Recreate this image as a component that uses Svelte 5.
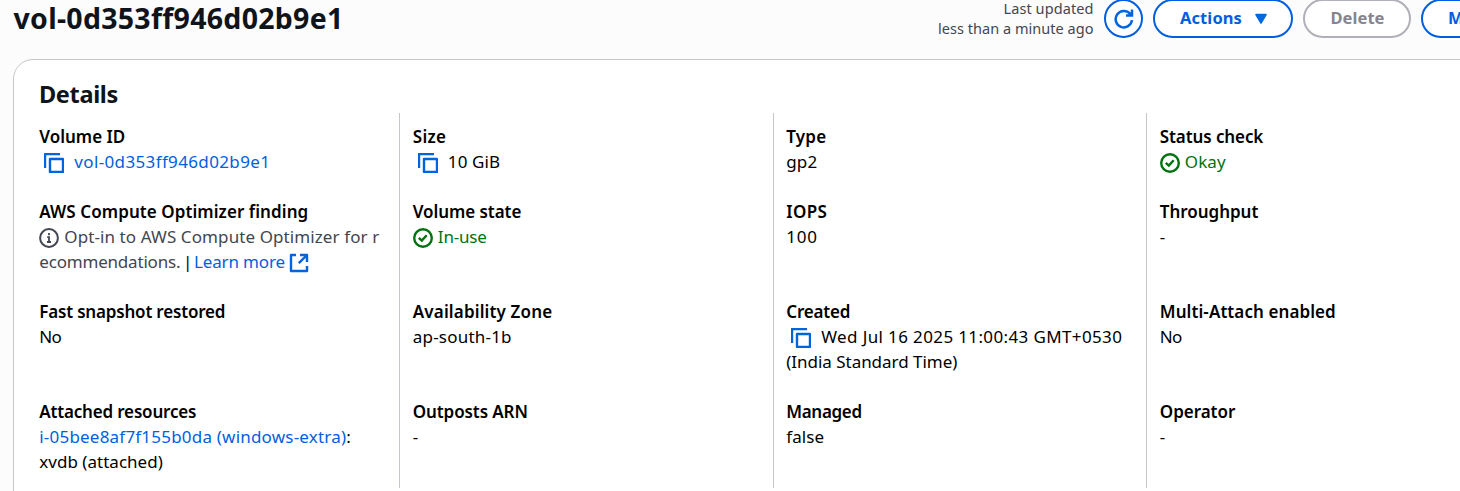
<script>
  const title = { text: 'vol-0d353ff946d02b9e1', width: 330 };

  // Each line holds its parts; width is the advance that the text is tracked to.
  const columns = [
    [
      { label: 'Volume ID', width: 86, lines: [[{ icon: 'copy' }, { text: 'vol-0d353ff946d02b9e1', width: 196, kind: 'link' }]] },
      {
        label: 'AWS Compute Optimizer finding', width: 269,
        lines: [
          [{ icon: 'info' }, { text: 'Opt-in to AWS Compute Optimizer for r', width: 315, kind: 'muted' }],
          [{ text: 'ecommendations.', width: 141, kind: 'muted' }, { text: '|', width: 9.4, kind: 'bar' }, { text: 'Learn more', width: 91, kind: 'link' }, { icon: 'external' }]
        ]
      },
      { label: 'Fast snapshot restored', width: 186, lines: [[{ text: 'No', width: 22 }]] },
      {
        label: 'Attached resources', width: 157,
        lines: [
          [{ text: 'i-05bee8af7f155b0da (windows-extra)', width: 307, kind: 'link' }, { text: ':', width: 4 }],
          [{ text: 'xvdb (attached)', width: 123.5 }]
        ]
      }
    ],
    [
      { label: 'Size', width: 33.5, lines: [[{ icon: 'copy' }, { text: '10 GiB', width: 52.5 }]] },
      { label: 'Volume state', width: 108.5, lines: [[{ icon: 'check' }, { text: 'In-use', width: 49, kind: 'ok' }]] },
      { label: 'Availability Zone', width: 139.5, lines: [[{ text: 'ap-south-1b', width: 99 }]] },
      { label: 'Outposts ARN', width: 115, lines: [[{ text: '-', width: 6 }]] }
    ],
    [
      { label: 'Type', width: 40, lines: [[{ text: 'gp2', width: 31 }]] },
      { label: 'IOPS', width: 41, lines: [[{ text: '100', width: 31.5 }]] },
      {
        label: 'Created', width: 64,
        lines: [
          [{ icon: 'copy' }, { text: 'Wed Jul 16 2025 11:00:43 GMT+0530', width: 301 }],
          [{ text: '(India Standard Time)', width: 171 }]
        ]
      },
      { label: 'Managed', width: 75.5, lines: [[{ text: 'false', width: 38 }]] }
    ],
    [
      { label: 'Status check', width: 103.5, lines: [[{ icon: 'check' }, { text: 'Okay', width: 41, kind: 'ok' }]] },
      { label: 'Throughput', width: 98.5, lines: [[{ text: '-', width: 6 }]] },
      { label: 'Multi-Attach enabled', width: 176, lines: [[{ text: 'No', width: 22 }]] },
      { label: 'Operator', width: 75.5, lines: [[{ text: '-', width: 6 }]] }
    ]
  ];

  // Spreads the difference between natural and wanted width over the letters.
  function track(node, width) {
    const natural = node.getBoundingClientRect().width;
    const count = node.textContent.length;
    node.style.letterSpacing = `${(width - natural) / count}px`;
  }
</script>

{#snippet icon(name)}
  {#if name === 'copy'}
    <svg class="icon copy" viewBox="0 0 20 20"><path d="M1 15V1h15" stroke-linejoin="round" /><rect x="6" y="6" width="13" height="13" stroke-linejoin="round" /></svg>
  {:else if name === 'info'}
    <svg class="icon info" viewBox="0 0 20 20"><circle cx="10" cy="10" r="8.9" /><path d="M10 5v2.2M8.2 9.2H10v5M8 14h4" stroke-width="1.8" /></svg>
  {:else if name === 'check'}
    <svg class="icon check" viewBox="0 0 20 20"><circle cx="10" cy="10" r="8.8" /><path d="M5.8 9.8l3 2.8 4.9-5.4" /></svg>
  {:else}
    <svg class="icon external" viewBox="0 0 20 20"><path d="M7 2H2v16h16v-5M11 2h7v7M18 2l-8.2 8.2" stroke-linejoin="round" /></svg>
  {/if}
{/snippet}

<div class="page">
  <header>
    <h1><span use:track={title.width}>{title.text}</span></h1>
    <div class="actions">
      <p class="updated">
        <span use:track={90}>Last updated</span>
        <span use:track={155.5}>less than a minute ago</span>
      </p>
      <button class="refresh" aria-label="Refresh">
        <svg viewBox="0 0 20 20"><path d="M18 11.2A8.2 8.2 0 1 1 16 4.7l1.4 1.6M18 .6v6h-6" /></svg>
      </button>
      <button class="menu">
        <span use:track={62}>Actions</span>
        <svg viewBox="0 0 14 12"><path d="M2 1.6h10L7 10z" /></svg>
      </button>
      <button class="delete" disabled><span use:track={54}>Delete</span></button>
      <button class="modify"><span use:track={57}>Modify</span></button>
    </div>
  </header>

  <section class="card">
    <h2><span use:track={79}>Details</span></h2>
    <div class="columns">
      {#each columns as fields}
        <dl>
          {#each fields as field}
            <div class="field">
              <dt><span use:track={field.width}>{field.label}</span></dt>
              {#each field.lines as line}
                <dd>
                  {#each line as part}
                    {#if part.icon}
                      {@render icon(part.icon)}
                    {:else}
                      <span class={part.kind} use:track={part.width}>{part.text}</span>
                    {/if}
                  {/each}
                </dd>
              {/each}
            </div>
          {/each}
        </dl>
      {/each}
    </div>
  </section>
</div>

<style>
  :global(body) {
    margin: 0;
    overflow: hidden;
    background: #fcfcfd;
  }
  .page {
    box-sizing: border-box;
    width: 1460px;
    height: 491px;
    overflow: hidden;
    font-family: 'Noto Sans', 'Open Sans', sans-serif;
    font-size: 17px;
    line-height: 25px;
    color: #0f141a;
  }
  span {
    display: inline-block;
    flex: none;
    white-space: pre;
  }
  h1, h2, p, dl, dd { margin: 0; }
  header {
    display: flex;
    justify-content: space-between;
    height: 59px;
    padding-left: 13.5px;
  }
  h1 {
    font-size: 28.5px;
    line-height: 36px;
    font-weight: 700;
  }
  .actions {
    display: flex;
    flex: none;
    width: 522px;
    height: 38px;
  }
  .updated {
    display: flex;
    flex-direction: column;
    align-items: flex-end;
    width: 155.5px;
    margin: -1px 10.5px 0 0;
    font-size: 14.5px;
    line-height: 20px;
    color: #424650;
  }
  .updated span:first-child { margin-top: -1px; }
  button {
    box-sizing: border-box;
    display: flex;
    flex: none;
    align-items: center;
    justify-content: center;
    height: 39px;
    margin: -1px 10px 0 0;
    padding: 0;
    border: 2px solid #005fe0;
    border-radius: 20px;
    background: #fff;
    color: #005fe0;
    font: 700 16.5px/25px 'Noto Sans', 'Open Sans', sans-serif;
  }
  button span { margin-top: -3px; }
  .refresh { width: 39px; }
  .refresh svg {
    width: 20px;
    height: 20px;
    fill: none;
    stroke: #0064e0;
    stroke-width: 2.5;
  }
  .menu { width: 140px; gap: 12px; padding-left: 2px; }
  .menu svg {
    width: 14px;
    height: 12px;
    fill: #0068e0;
    stroke: #0068e0;
    stroke-width: 1.6;
    stroke-linejoin: round;
  }
  .delete {
    width: 108px;
    padding-left: 1px;
    border-color: #b0b0b8;
    background: #fff;
    color: #85858d;
  }
  .modify {
    width: 111px;
    margin-right: 0;
  }
  .card {
    box-sizing: border-box;
    width: 1600px;
    height: 460px;
    margin-left: 13px;
    border: 1px solid #c6c6cd;
    border-radius: 20px;
    background: #fff;
  }
  h2 {
    height: 53px;
    padding: 20px 0 0 25px;
    box-sizing: border-box;
    font-size: 23.5px;
    line-height: 28px;
    font-weight: 700;
  }
  .columns {
    display: grid;
    grid-template-columns: repeat(4, 373.5px);
    margin-left: 11.6px;
    color: #000;
  }
  dl {
    display: grid;
    grid-template-rows: 75px 100px 100px 75px;
    padding: 11px 0 14px 12.7px;
    border-left: 1px solid #c6c6cd;
  }
  dl:first-child { border-left-color: transparent; }
  dt { height: 25px; font-weight: 600; }
  dd {
    display: flex;
    align-items: center;
    height: 25px;
  }
  .link { color: #005fe0; }
  .muted { color: #424650; }
  .bar { margin: 0 1.6px 0 2.7px; }
  .ok { color: #00730f; }
  .icon {
    flex: none;
    width: 20px;
    height: 20px;
    margin-top: 3px;
    fill: none;
    stroke: #0064e0;
    stroke-width: 2.4;
  }
  .copy { margin-left: 5px; margin-right: 10px; }
  .info, .check { margin-right: 5px; }
  .info { stroke: #424650; stroke-width: 2; }
  .check { stroke: #00730f; }
  .external { margin-left: 4px; }
</style>
